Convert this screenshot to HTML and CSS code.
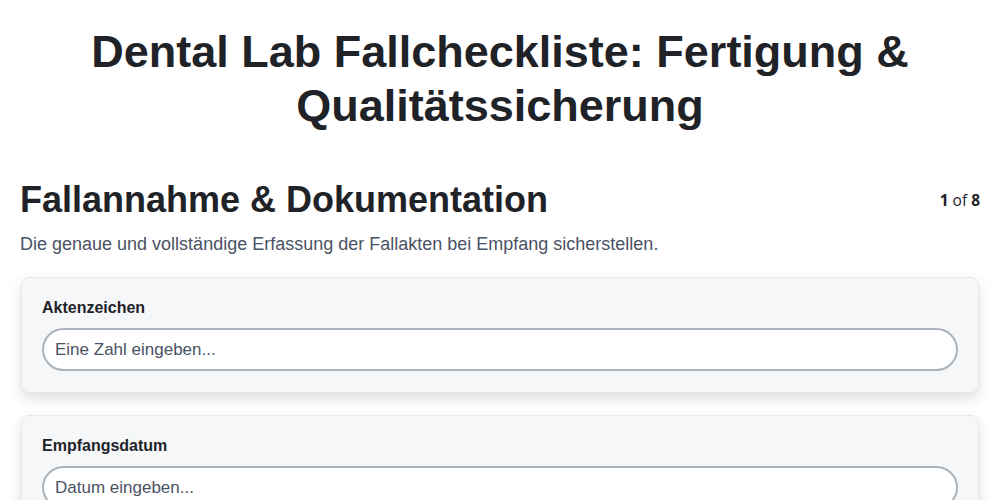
FILE: index.html
```html
<!DOCTYPE html>
<html lang="de">
<head>
    <meta charset="UTF-8">
    <meta name="viewport" content="width=device-width, initial-scale=1.0">
    <title>Dental Lab Fallcheckliste</title>
    <link rel="stylesheet" href="styles.css">
</head>
<body>
    <div class="page">
        <h1 class="page-title">Dental Lab Fallcheckliste: Fertigung &amp; Qualitätssicherung</h1>

        <!-- Section header -->
        <div class="section-head">
            <h2 class="section-title">Fallannahme &amp; Dokumentation</h2>
            <div class="step-count"><b>1</b> of <b>8</b></div>
        </div>
        <p class="section-desc">Die genaue und vollständige Erfassung der Fallakten bei Empfang sicherstellen.</p>

        <div class="field-card">
            <label class="field-label" for="akte">Aktenzeichen</label>
            <input class="field-input" id="akte" type="text" placeholder="Eine Zahl eingeben...">
        </div>

        <div class="field-card">
            <label class="field-label" for="datum">Empfangsdatum</label>
            <input class="field-input" id="datum" type="text" placeholder="Datum eingeben...">
        </div>
    </div>
</body>
</html>
```

FILE: styles.css
```css
/* General Reset */
* {
    margin: 0;
    padding: 0;
    box-sizing: border-box;
}

body {
    font-family: 'Liberation Sans', Arial, sans-serif;
    background: #fff;
    color: #1f2328;
}

.page {
    padding: 25px 20px 40px;
}

.page-title {
    font-size: 45px;
    line-height: 54px;
    text-align: center;
    font-weight: bold;
    color: #1f2328;
    margin-bottom: 45px;
}

/* Section header */
.section-head {
    display: flex;
    justify-content: space-between;
    align-items: center;
}

.section-title {
    font-size: 36px;
    line-height: 44px;
    font-weight: bold;
}

.step-count {
    font-family: 'Open Sans', 'Noto Sans', sans-serif;
    font-size: 15.5px;
    color: #1f2328;
}

.section-desc {
    font-size: 18px;
    line-height: 24px;
    color: #4a5264;
    margin-top: 10px;
    margin-bottom: 21px;
}

/* Field cards */
.field-card {
    background: #f6f7f9;
    border: 1px solid #e6e8ec;
    border-radius: 8px;
    padding: 20px 20px 21px;
    margin: 0 1px 22px;
    box-shadow: 0 6px 14px rgba(0, 0, 0, 0.13);
}

.field-label {
    display: block;
    font-size: 16px;
    font-weight: bold;
    line-height: 20px;
    margin-bottom: 10px;
}

.field-input {
    display: block;
    width: 100%;
    height: 43px;
    border: 2px solid #aab2bb;
    border-radius: 22px;
    background: #fff;
    padding: 0 11px;
    font-family: 'Liberation Sans', Arial, sans-serif;
    font-size: 17px;
    color: #1f2328;
    outline: none;
}

.field-input::placeholder {
    color: #4a5264;
}
```
